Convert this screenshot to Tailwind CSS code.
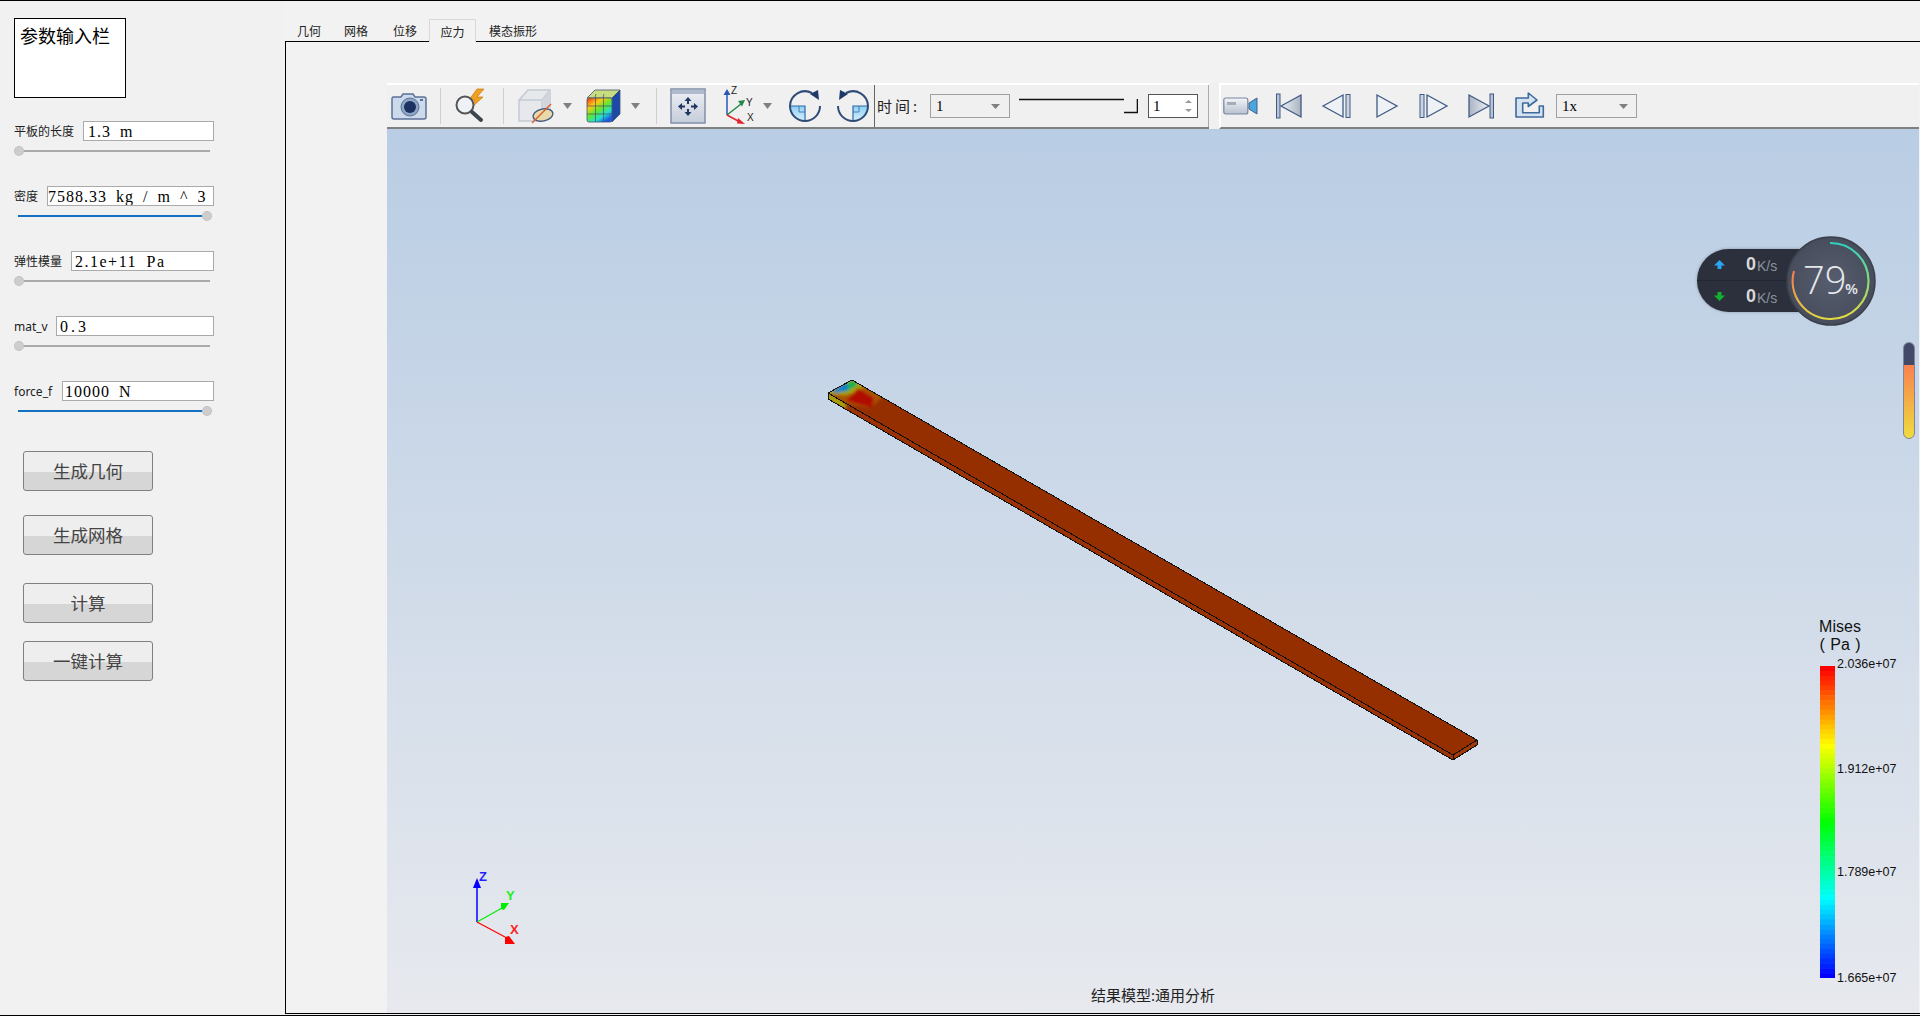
<!DOCTYPE html>
<html lang="en">
<head>
  <meta charset="UTF-8" />
  <meta name="viewport" content="width=device-width, initial-scale=1.0" />
  <title>参数输入栏</title>
  <script src="https://cdn.jsdelivr.net/npm/@tailwindcss/browser@4"></script>
</head>
<body class="w-[1920px] h-[1016px] overflow-hidden flex border-t border-b border-black bg-[#f1f1f1] text-black font-['Noto_Sans','Noto_Sans_CJK_SC',sans-serif]">

  <!-- left parameter column -->
  <aside class="w-[285px] shrink-0 pl-[14px] pt-[17px]">
    <div class="w-[112px] h-[80px] border border-black bg-white pl-[5px] pt-[3px] text-[18px] leading-[28px]">参数输入栏</div>

    <div class="w-[200px] mt-[23px]">
      <div class="flex items-center h-[20px]">
        <span class="w-[69px] pt-[2px] text-[12px] text-[#222]">平板的长度</span>
        <input readonly value="1.3 m" class="flex-1 min-w-0 h-[20px] border border-[#aaaaaa] bg-white pl-[4px] pt-[2px] text-[16px] tracking-[1px] [word-spacing:4px] font-['Liberation_Serif','Noto_Sans_CJK_SC',serif] outline-none" />
      </div>
      <div class="flex items-center h-[10px] mt-[5px]">
        <span class="w-[10px] h-[10px] rounded-full bg-[#cdcdcd] border border-dotted border-[#b8b8b8]"></span>
        <span class="w-[186px] h-[2px] bg-[#aaaaaa]"></span>
      </div>
    </div>

    <div class="w-[200px] mt-[30px]">
      <div class="flex items-center h-[20px]">
        <span class="w-[33px] pt-[2px] text-[12px] text-[#222]">密度</span>
        <input readonly value="7588.33 kg / m ^ 3" class="flex-1 min-w-0 h-[20px] border border-[#aaaaaa] bg-white pl-[0px] pt-[2px] text-[16px] tracking-[1px] [word-spacing:4px] font-['Liberation_Serif','Noto_Sans_CJK_SC',serif] outline-none" />
      </div>
      <div class="flex items-center h-[10px] mt-[5px] pl-[4px]">
        <span class="w-[184px] h-[2px] bg-[#1470c0]"></span>
        <span class="w-[10px] h-[10px] rounded-full bg-[#cdcdcd] border border-dotted border-[#b8b8b8]"></span>
      </div>
    </div>

    <div class="w-[200px] mt-[30px]">
      <div class="flex items-center h-[20px]">
        <span class="w-[57px] pt-[2px] text-[12px] text-[#222]">弹性模量</span>
        <input readonly value="2.1e+11 Pa" class="flex-1 min-w-0 h-[20px] border border-[#aaaaaa] bg-white pl-[3px] pt-[2px] text-[16px] tracking-[1.500px] [word-spacing:4px] font-['Liberation_Serif','Noto_Sans_CJK_SC',serif] outline-none" />
      </div>
      <div class="flex items-center h-[10px] mt-[5px]">
        <span class="w-[10px] h-[10px] rounded-full bg-[#cdcdcd] border border-dotted border-[#b8b8b8]"></span>
        <span class="w-[186px] h-[2px] bg-[#aaaaaa]"></span>
      </div>
    </div>

    <div class="w-[200px] mt-[30px]">
      <div class="flex items-center h-[20px]">
        <span class="w-[42px] pt-[2px] text-[12px] text-[#222]">mat_v</span>
        <input readonly value="0.3" class="flex-1 min-w-0 h-[20px] border border-[#aaaaaa] bg-white pl-[3px] pt-[2px] text-[16px] tracking-[3px] font-['Liberation_Serif','Noto_Sans_CJK_SC',serif] outline-none" />
      </div>
      <div class="flex items-center h-[10px] mt-[5px]">
        <span class="w-[10px] h-[10px] rounded-full bg-[#cdcdcd] border border-dotted border-[#b8b8b8]"></span>
        <span class="w-[186px] h-[2px] bg-[#aaaaaa]"></span>
      </div>
    </div>

    <div class="w-[200px] mt-[30px]">
      <div class="flex items-center h-[20px]">
        <span class="w-[48px] pt-[2px] text-[12px] text-[#222]">force_f</span>
        <input readonly value="10000 N" class="flex-1 min-w-0 h-[20px] border border-[#aaaaaa] bg-white pl-[2px] pt-[2px] text-[16px] tracking-[1px] [word-spacing:4px] font-['Liberation_Serif','Noto_Sans_CJK_SC',serif] outline-none" />
      </div>
      <div class="flex items-center h-[10px] mt-[5px] pl-[4px]">
        <span class="w-[184px] h-[2px] bg-[#1470c0]"></span>
        <span class="w-[10px] h-[10px] rounded-full bg-[#cdcdcd] border border-dotted border-[#b8b8b8]"></span>
      </div>
    </div>

    <div class="ml-[9px] mt-[35px] w-[130px]">
      <button class="block w-full h-[40px] rounded-[3px] border border-[#808080] bg-[linear-gradient(#eeeeee_52%,#d6d6d6_52%)] text-[17.5px] text-[#444]">生成几何</button>
      <button class="block w-full h-[40px] mt-[24px] rounded-[3px] border border-[#808080] bg-[linear-gradient(#eeeeee_52%,#d6d6d6_52%)] text-[17.5px] text-[#444]">生成网格</button>
      <button class="block w-full h-[40px] mt-[28px] rounded-[3px] border border-[#808080] bg-[linear-gradient(#eeeeee_52%,#d6d6d6_52%)] text-[17.5px] text-[#444]">计算</button>
      <button class="block w-full h-[40px] mt-[18px] rounded-[3px] border border-[#808080] bg-[linear-gradient(#eeeeee_52%,#d6d6d6_52%)] text-[17.5px] text-[#444]">一键计算</button>
    </div>
  </aside>

  <main class="flex-1 min-w-0 flex flex-col pt-[18px] pb-[1px] bg-[#f2f2f2]">
    <!-- tabs -->
    <nav class="h-[22px] flex text-[12px] text-[#222] relative">
      <span class="ml-[12px] w-[24px] leading-[26px]">几何</span>
      <span class="ml-[23px] w-[24px] leading-[26px]">网格</span>
      <span class="ml-[25px] w-[24px] leading-[26px]">位移</span>
      <span class="ml-[12px] w-[47px] h-[23px] border border-b-0 border-[#d8d8d8] bg-[#f2f2f2] text-center leading-[25px] z-10">应力</span>
      <span class="ml-[13px] w-[48px] leading-[26px]">模态振形</span>
    </nav>

    <section class="h-[973px] border-l border-t border-b border-black pl-[101px] pt-[41px] pr-[1px] flex flex-col">
      <!-- toolbars -->
      <div class="h-[46px] shrink-0 flex">
        <div class="w-[822px] flex items-center bg-[#f0f0f0] border-t-2 border-white border-b-2 border-b-[#808080]">
          <svg class="ml-[4px] shrink-0" width="36" height="30" viewBox="0 0 36 30">
            <path d="M2 6h8l2-3h10l2 3h9q2 0 2 2v18q0 2-2 2H3q-2 0-2-2V8q0-2 1-2z" fill="#cddaec" stroke="#5b7097" stroke-width="1.5"/>
            <circle cx="19" cy="16" r="9" fill="#8ea5c6" stroke="#5b7097"/>
            <circle cx="19" cy="16" r="6" fill="#1d3261"/>
            <rect x="29" y="8" width="3" height="2" fill="#5b7097"/>
          </svg>
          <span class="ml-[13px] w-[1px] h-[36px] bg-[#cfcfcf] shrink-0"></span>
          <svg class="ml-[11px] shrink-0" width="36" height="36" viewBox="0 0 36 36">
            <path d="M25 1l-8 11h6l-5 9 13-12h-6l7-8z" fill="#f0a020" stroke="#c87810" stroke-width=".7"/>
            <circle cx="13" cy="17" r="8.5" fill="#eef2f6" stroke="#555" stroke-width="2"/>
            <path d="M20 24l9 8" stroke="#3c4650" stroke-width="4" stroke-linecap="round"/>
          </svg>
          <span class="ml-[15px] w-[1px] h-[36px] bg-[#cfcfcf] shrink-0"></span>
          <svg class="ml-[14px] shrink-0" width="36" height="36" viewBox="0 0 36 36">
            <path d="M1 12L10 2h22v22l-8 9H1z" fill="#e6e8ec" stroke="#c3cad4" stroke-width="1.5"/>
            <path d="M1 12h23v21M24 12l8-10" fill="none" stroke="#c3cad4" stroke-width="1.5"/>
            <path d="M24 12l8-10v22l-8 9z" fill="#d2d6dc"/>
            <ellipse cx="25" cy="27" rx="10" ry="6" fill="#e7d9a8" stroke="#40557f" stroke-width="1.3" transform="rotate(-12 25 27)"/>
            <path d="M14 35L33 16" stroke="#d8602a" stroke-width="1.5"/>
          </svg>
          <svg class="ml-[9px] shrink-0" width="9" height="6" viewBox="0 0 9 6"><path d="M0 0h9L4.5 6z" fill="#808080"/></svg>
          <svg class="ml-[14px] shrink-0" width="36" height="36" viewBox="0 0 36 36">
            <defs>
              <linearGradient id="cubeFace" x1="0" y1="0" x2="0.7" y2="1">
                <stop offset="0" stop-color="#f02a1a"/><stop offset=".3" stop-color="#ffc810"/><stop offset=".55" stop-color="#60e830"/><stop offset=".8" stop-color="#20e0d0"/><stop offset="1" stop-color="#1a5ae8"/>
              </linearGradient>
            </defs>
            <path d="M9 2h25l-8 8H1z" fill="#c8dc80" stroke="#44536f" stroke-width=".8"/>
            <path d="M26 10l8-8v24l-8 8z" fill="#1c4aa8" stroke="#44536f" stroke-width=".8"/>
            <rect x="1" y="10" width="25" height="24" rx="2" fill="url(#cubeFace)" stroke="#44536f" stroke-width=".8"/>
            <path d="M9.5 10v24M17.5 10v24M1 18h25M1 26h25M10 6l-1 4M18 6l-1 4" stroke="#3f4d68" stroke-width=".7"/>
          </svg>
          <svg class="ml-[9px] shrink-0" width="9" height="6" viewBox="0 0 9 6"><path d="M0 0h9L4.5 6z" fill="#808080"/></svg>
          <span class="ml-[16px] w-[1px] h-[36px] bg-[#cfcfcf] shrink-0"></span>
          <svg class="ml-[13px] shrink-0" width="36" height="36" viewBox="0 0 36 36">
            <defs><linearGradient id="fitFace" x1="0" y1="0" x2="0" y2="1"><stop offset="0" stop-color="#eef0f5"/><stop offset="1" stop-color="#c5ccda"/></linearGradient></defs>
            <rect x="1" y="1" width="34" height="34" fill="url(#fitFace)" stroke="#8090a8" stroke-width="1.500"/>
            <rect x="2" y="2" width="32" height="4" fill="#aebacd"/>
            <path d="M18 9l-3.500 4h2.500v3h2v-3h2.500zM18 28l-3.500-4h2.500v-3h2v3h2.500zM8 18.500l4-3.500v2.500h3v2h-3v2.500zM28 18.500l-4-3.500v2.500h-3v2h3v2.500z" fill="#1f3763"/>
          </svg>
          <svg class="ml-[14px] shrink-0" width="36" height="42" viewBox="0 0 36 42">
            <path d="M7 30V8" stroke="#2a56b8" stroke-width="1.500"/><path d="M3.500 10L7 4l3.500 6z" fill="#2a56b8"/>
            <path d="M7 30L21 19" stroke="#1f8a46" stroke-width="1.500"/><path d="M18 16l7-1-3 6.500z" fill="#1f8a46"/>
            <path d="M7 30l13 7" stroke="#e0262c" stroke-width="1.500"/><path d="M18 33l7 6-8-.5z" fill="#e0262c"/>
            <text x="11" y="9" font-size="10" font-family="Liberation Sans" fill="#222">Z</text>
            <text x="26" y="21" font-size="10" font-family="Liberation Sans" fill="#222">Y</text>
            <text x="27" y="36" font-size="10" font-family="Liberation Sans" fill="#222">X</text>
          </svg>
          <svg class="ml-[7px] shrink-0" width="9" height="6" viewBox="0 0 9 6"><path d="M0 0h9L4.5 6z" fill="#808080"/></svg>
          <svg class="ml-[16px] shrink-0" width="34" height="34" viewBox="0 0 34 34">
            <defs><linearGradient id="wedge" x1="0" y1="1" x2="0" y2="0"><stop offset="0" stop-color="#d6eefb"/><stop offset="1" stop-color="#8fd0f4"/></linearGradient></defs>
            <path d="M2 17h15v15A15 15 0 0 1 2 17z" fill="url(#wedge)"/>
            <path d="M11 17v6h6" fill="none" stroke="#2d6aa8" stroke-width=".8"/>
            <path d="M2 17h15v15" fill="none" stroke="#2d6aa8" stroke-width="1.200"/>
            <path d="M24 4A15 15 0 0 0 2 17a15 15 0 0 0 15 15 15 15 0 0 0 15-15" fill="none" stroke="#2f4c78" stroke-width="2"/>
            <path d="M22 5l8-4 1 10z" fill="#1f3a68"/>
          </svg>
          <svg class="ml-[14px] shrink-0" width="34" height="34" viewBox="0 0 34 34">
            <path d="M32 17H17v15A15 15 0 0 0 32 17z" fill="url(#wedge)"/>
            <path d="M23 17v6h-6" fill="none" stroke="#2d6aa8" stroke-width=".8"/>
            <path d="M32 17H17v15" fill="none" stroke="#2d6aa8" stroke-width="1.200"/>
            <path d="M10 4A15 15 0 0 1 32 17a15 15 0 0 1-15 15A15 15 0 0 1 2 17" fill="none" stroke="#2f4c78" stroke-width="2"/>
            <path d="M12 5L4 1 3 11z" fill="#1f3a68"/>
          </svg>
          <span class="ml-[4px] w-[1px] h-full bg-[#666] shrink-0"></span>
          <span class="ml-[2px] w-[44px] shrink-0 text-[15px] text-[#222] tracking-[3px]">时间:</span>
          <div class="ml-[9px] w-[80px] h-[24px] shrink-0 flex items-center justify-between border border-[#a0a0a0] pl-[5px] pr-[9px] text-[15px] font-['Liberation_Serif',serif]">
            <span>1</span>
            <svg width="9" height="5" viewBox="0 0 9 5"><path d="M0 0h9L4.500 5z" fill="#808080"/></svg>
          </div>
          <svg class="ml-[9px] shrink-0" width="119" height="24" viewBox="0 0 119 24">
            <path d="M0 5.500h105" stroke="#111" stroke-width="1.600"/>
            <path d="M105 18.500h13.500V5" fill="none" stroke="#111" stroke-width="1.600"/>
          </svg>
          <div class="ml-[10px] w-[50px] h-[24px] shrink-0 flex items-center justify-between border border-[#555] bg-white pl-[4px] pr-[5px] text-[15px] font-['Liberation_Serif',serif]">
            <span>1</span>
            <svg width="7" height="14" viewBox="0 0 7 14"><path d="M0 4l3.500-3L7 4zM0 10l3.500 3L7 10z" fill="#999"/></svg>
          </div>
          <span class="ml-[10px] w-[1px] h-full bg-[#aaaaaa] shrink-0"></span>
        </div>
        <div class="w-[10px] bg-[#f0f0f0]"></div>
        <div class="flex-1 flex items-center bg-[#f0f0f0] border-t-2 border-l-2 border-white border-b-2 border-b-[#808080]">
          <svg class="ml-[2px] shrink-0" width="36" height="20" viewBox="0 0 36 20">
            <defs><linearGradient id="camBody" x1="0" y1="0" x2="0" y2="1"><stop offset="0" stop-color="#f3f5f8"/><stop offset="1" stop-color="#b8c1d0"/></linearGradient></defs>
            <rect x=".8" y="2" width="24" height="16" rx="2" fill="url(#camBody)" stroke="#77869f" stroke-width="1.200"/>
            <rect x="4" y="6" width="9" height="3" fill="#a5adb8"/>
            <path d="M26 7l8-5v16l-8-5z" fill="#4aa6dc" stroke="#43608c"/>
          </svg>
          <svg class="ml-[16px] shrink-0" width="28" height="28" viewBox="0 0 28 28">
            <defs><linearGradient id="mediaA" x1="0" y1="0" x2="1" y2="0"><stop offset="0" stop-color="#eef1f5"/><stop offset="1" stop-color="#a9b3c1"/></linearGradient><linearGradient id="mediaB" x1="0" y1="0" x2="1" y2="0"><stop offset="0" stop-color="#a9b3c1"/><stop offset="1" stop-color="#eef1f5"/></linearGradient></defs>
            <rect x="1.500" y="2" width="3.500" height="24" fill="#b9c3d3" stroke="#3f5a85"/>
            <path d="M6 14L26 3v22z" fill="url(#mediaA)" stroke="#3f5a85" stroke-width="1.300"/>
          </svg>
          <svg class="ml-[18px] shrink-0" width="32" height="28" viewBox="0 0 32 28">
            <path d="M2 14L22 3v22z" fill="#eef1f5" stroke="#3f5a85" stroke-width="1.300"/>
            <rect x="25" y="2.500" width="4" height="23" fill="#ccd4e0" stroke="#3f5a85"/>
          </svg>
          <svg class="ml-[22px] shrink-0" width="24" height="28" viewBox="0 0 24 28">
            <path d="M2 3l20 11L2 25z" fill="#eef1f5" stroke="#3f5a85" stroke-width="1.300"/>
          </svg>
          <svg class="ml-[19px] shrink-0" width="32" height="28" viewBox="0 0 32 28">
            <rect x="2" y="2.500" width="4" height="23" fill="#ccd4e0" stroke="#3f5a85"/>
            <path d="M9 3l20 11L9 25z" fill="#eef1f5" stroke="#3f5a85" stroke-width="1.300"/>
          </svg>
          <svg class="ml-[17px] shrink-0" width="28" height="28" viewBox="0 0 28 28">
            <path d="M2 3l20 11L2 25z" fill="url(#mediaB)" stroke="#3f5a85" stroke-width="1.300"/>
            <rect x="23" y="2" width="3.500" height="24" fill="#b9c3d3" stroke="#3f5a85"/>
          </svg>
          <svg class="ml-[19px] shrink-0" width="32" height="28" viewBox="0 0 32 28">
            <path d="M2 6h12.300V1L23 8l-8.700 6.500V11H8.700v9.700h16.600V14h4v11H2z" fill="#d5e2f2" stroke="#3f6a9c" stroke-width="1.600" stroke-linejoin="round"/>
          </svg>
          <div class="ml-[10px] w-[81px] h-[24px] shrink-0 flex items-center justify-between border border-[#a0a0a0] pl-[5px] pr-[8px] text-[15px] font-['Liberation_Serif',serif]">
            <span>1x</span>
            <svg width="9" height="5" viewBox="0 0 9 5"><path d="M0 0h9L4.500 5z" fill="#808080"/></svg>
          </div>
        </div>
      </div>

      <!-- 3d view -->
      <div class="relative flex-1 bg-[linear-gradient(#b9cde4,#e7e9ee)]">
        <svg class="absolute left-0 top-0" width="1532" height="884" viewBox="387 129 1532 884">
          <defs>
            <clipPath id="topFace"><path d="M852 380L1477 740 1453 755 828 393z"/></clipPath>
            <clipPath id="sideFace"><path d="M828 393L1453 755V760L828 399z"/></clipPath>
            <filter id="soft" x="-50%" y="-50%" width="200%" height="200%"><feGaussianBlur stdDeviation="1.500"/></filter>
          </defs>
          <path d="M852 380L1477 740 1453 755 828 393z" fill="#962f00"/>
          <path d="M828 393L1453 755V760L828 399z" fill="#9a3205"/>
          <path d="M1453 755L1477 740V745L1453 760z" fill="#a03808"/>
          <g clip-path="url(#topFace)">
            <g filter="url(#soft)">
              <path d="M852 376L884 396 870 408 846 404 822 392z" fill="#a85200"/>
              <path d="M852 376L866 385 856 392 846 395 824 394z" fill="#a8a010"/>
              <path d="M853 379L858 385 846 392 838 392z" fill="#10b050"/>
              <path d="M847 382L848 390 836 393 832 391z" fill="#0f7fc8"/>
              <path d="M846 401L858 388 874 398 872 408z" fill="#b00c00"/>
            </g>
          </g>
          <g clip-path="url(#sideFace)">
            <path d="M826 391L846 403V410L826 399z" fill="#a8a010" filter="url(#soft)"/>
          </g>
          <path d="M852 380L1477 740V745L1453 760 828 399V393zM828 393L1453 755 1477 740M1453 755V760" fill="none" stroke="#111" stroke-width="1" shape-rendering="crispEdges"/>
          <!-- axis triad -->
          <path d="M477 922V886" stroke="#0000ff" stroke-width="1.500"/><path d="M477 878l-4 10h8z" fill="#0000ff"/>
          <path d="M477 922l25-14" stroke="#00ee00" stroke-width="1.200"/><path d="M501 903l8 0-5 7-3-1z" fill="#00ee00"/>
          <path d="M477 922l28 15" stroke="#ff0000" stroke-width="1.200"/><path d="M505 937l4-1 6 8h-10z" fill="#ff0000"/>
          <text x="479" y="881" font-size="13" font-weight="bold" font-family="Liberation Sans" fill="#2222ff">Z</text>
          <text x="506" y="900" font-size="13" font-weight="bold" font-family="Liberation Sans" fill="#22ee22">Y</text>
          <text x="510" y="934" font-size="13" font-weight="bold" font-family="Liberation Sans" fill="#ff2222">X</text>
        </svg>

        <!-- network monitor widget -->
        <div class="absolute left-[1310px] top-[120px] w-[110px] h-[63px] rounded-l-full bg-[#2b303c] text-[#d8d8d8] shadow-[0_0_3px_rgba(0,0,0,.3)]">
          <div class="h-[32px] flex items-center border-b border-[#232731]">
            <svg class="ml-[17px]" width="11" height="11" viewBox="0 0 11 11"><path d="M5.500 1L11 6.500H7.500V10h-4V6.500H0z" fill="#2aa5f0"/></svg>
            <span class="ml-[21px] text-[18px] font-bold font-['Liberation_Sans',sans-serif]">0</span><span class="ml-[1px] text-[14px] text-[#8d939e] mt-[3px] font-['Liberation_Sans',sans-serif]">K/s</span>
          </div>
          <div class="h-[31px] flex items-center">
            <svg class="ml-[17px]" width="11" height="11" viewBox="0 0 11 11"><path d="M5.500 10L11 4.500H7.500V1h-4v3.500H0z" fill="#14b030"/></svg>
            <span class="ml-[21px] text-[18px] font-bold font-['Liberation_Sans',sans-serif]">0</span><span class="ml-[1px] text-[14px] text-[#8d939e] mt-[3px] font-['Liberation_Sans',sans-serif]">K/s</span>
          </div>
        </div>
        <svg class="absolute left-[1399px] top-[107px]" width="90" height="90" viewBox="0 0 90 90">
          <defs>
            <linearGradient id="ringA" x1="0" y1="0" x2="0" y2="1"><stop offset="0" stop-color="#2fd0c0"/><stop offset=".5" stop-color="#86d878"/><stop offset="1" stop-color="#e4d840"/></linearGradient>
            <linearGradient id="ringB" x1="0" y1="1" x2="0" y2="0"><stop offset="0" stop-color="#e4d840"/><stop offset="1" stop-color="#f07a50"/></linearGradient>
            <radialGradient id="dial"><stop offset="0" stop-color="#565d6e"/><stop offset="1" stop-color="#474d5c"/></radialGradient>
          </defs>
          <circle cx="45" cy="45" r="44" fill="url(#dial)" stroke="#3a404c" stroke-width="1.500"/>
          <path d="M44 7A38 38 0 0 1 45 83" fill="none" stroke="url(#ringA)" stroke-width="2.200"/>
          <path d="M45 83A38 38 0 0 1 8 35" fill="none" stroke="url(#ringB)" stroke-width="2.200"/>
          <text x="17" y="58" font-size="38" fill="#e6e8ec" font-family="Open Sans" font-weight="300">79</text>
          <text x="59" y="58" font-size="15" fill="#e6e8ec" font-family="Open Sans" font-weight="600">%</text>
        </svg>
        <div class="absolute left-[1516px] top-[213px] w-[12px] h-[97px] rounded-full border border-[#80869a] overflow-hidden bg-[linear-gradient(#434a68_0,#434a68_23%,#f98150_23%,#f0dc3c_100%)]"></div>

        <!-- legend -->
        <div class="absolute left-[1431px] top-[489px] w-[44px] text-center text-[16px] leading-[18px] text-[#111] font-['Liberation_Sans',sans-serif] [word-spacing:1px]">Mises<br />( Pa )</div>
        <svg id="legendBar" class="absolute left-[1433px] top-[537px]" width="15" height="312"></svg>
        <span class="absolute left-[1450px] top-[528px] text-[12.500px] leading-[14px] text-[#111] font-['Liberation_Sans',sans-serif]">2.036e+07</span>
        <span class="absolute left-[1450px] top-[633px] text-[12.500px] leading-[14px] text-[#111] font-['Liberation_Sans',sans-serif]">1.912e+07</span>
        <span class="absolute left-[1450px] top-[736px] text-[12.500px] leading-[14px] text-[#111] font-['Liberation_Sans',sans-serif]">1.789e+07</span>
        <span class="absolute left-[1450px] top-[842px] text-[12.500px] leading-[14px] text-[#111] font-['Liberation_Sans',sans-serif]">1.665e+07</span>

        <span class="absolute left-[704px] top-[857px] text-[15px] leading-[18px] text-[#222]">结果模型:通用分析</span>
      </div>
    </section>
  </main>

  <script>
    // legend colour bands, red at the top down to blue
    const bar = document.getElementById('legendBar');
    const bands = 64;
    let rects = '';
    for (let i = 0; i < bands; i++) {
      const hue = Math.round((i / (bands - 1)) * 240);
      rects += `<rect x="0" y="${(i * 312) / bands}" width="15" height="${312 / bands + 0.5}" fill="hsl(${hue} 100% 50%)"/>`;
    }
    bar.innerHTML = rects;
  </script>
</body>
</html>
